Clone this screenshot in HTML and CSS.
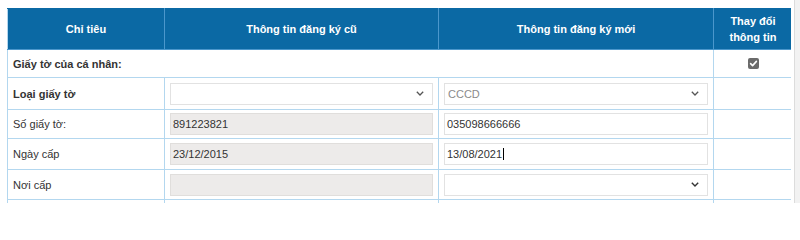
FILE: index.html
```html
<!DOCTYPE html>
<html lang="vi">
<head>
<meta charset="utf-8">
<title>Thay đổi thông tin</title>
<link rel="stylesheet" href="styles.css">
</head>
<body>
<div class="page">
  <div class="content">
    <table class="grid">
      <colgroup>
        <col class="c1"><col class="c2"><col class="c3"><col class="c4">
      </colgroup>
      <thead>
        <tr class="head">
          <th>Chỉ tiêu</th>
          <th>Thông tin đăng ký cũ</th>
          <th>Thông tin đăng ký mới</th>
          <th>Thay đổi<br>thông tin</th>
        </tr>
      </thead>
      <tbody>
        <tr class="r-section">
          <td colspan="3" class="label bold">Giấy tờ của cá nhân:</td>
          <td class="center"><span class="check"><svg viewBox="0 0 11 11" width="11" height="11"><path d="M2.6 5.6 L4.6 7.6 L8.4 3.4" fill="none" stroke="#fff" stroke-width="1.6" stroke-linecap="round" stroke-linejoin="round"/></svg></span></td>
        </tr>
        <tr class="r-type">
          <td class="label bold">Loại giấy tờ</td>
          <td><div class="field select"><span class="val"></span><svg class="chev" viewBox="0 0 8 5" width="8" height="5"><path d="M0.8 0.8 L4 4 L7.2 0.8" fill="none" stroke="#555" stroke-width="1.3"/></svg></div></td>
          <td><div class="field select"><span class="val muted">CCCD</span><svg class="chev" viewBox="0 0 8 5" width="8" height="5"><path d="M0.8 0.8 L4 4 L7.2 0.8" fill="none" stroke="#555" stroke-width="1.3"/></svg></div></td>
          <td></td>
        </tr>
        <tr class="r-num">
          <td class="label">Số giấy tờ:</td>
          <td><div class="field disabled"><span class="val">891223821</span></div></td>
          <td><div class="field"><span class="val">035098666666</span></div></td>
          <td></td>
        </tr>
        <tr class="r-date">
          <td class="label">Ngày cấp</td>
          <td><div class="field disabled"><span class="val">23/12/2015</span></div></td>
          <td><div class="field"><span class="val">13/08/2021</span><span class="caret"></span></div></td>
          <td></td>
        </tr>
        <tr class="r-place">
          <td class="label">Nơi cấp</td>
          <td><div class="field disabled"><span class="val"></span></div></td>
          <td><div class="field select"><span class="val"></span><svg class="chev" viewBox="0 0 8 5" width="8" height="5"><path d="M0.8 0.8 L4 4 L7.2 0.8" fill="none" stroke="#333" stroke-width="1.4"/></svg></div></td>
          <td></td>
        </tr>
        <tr class="r-more">
          <td></td><td></td><td></td><td></td>
        </tr>
      </tbody>
    </table>
  </div>
  <div class="scrollbar"></div>
</div>
</body>
</html>
```

FILE: styles.css
```css
html, body {
  margin: 0;
  padding: 0;
  background: #fff;
  height: 203px;
  overflow: hidden;
}
body {
  font-family: "Liberation Sans", Arial, sans-serif;
  font-size: 11px;
  color: #333;
}
.page {
  display: flex;
  height: 203px;
}
.content {
  flex: 1;
  padding: 8px 0 0 7px;
  overflow: hidden;
}
.scrollbar {
  width: 5px;
  border-left: 1px solid #dcdcdc;
  background: #f2f2f2;
  margin-left: 3px;
}
.grid {
  border-collapse: collapse;
  table-layout: fixed;
  width: 785px;
}
.c1 { width: 157px; }
.c2 { width: 274px; }
.c3 { width: 275px; }
.c4 { width: 79px; }
.grid td, .grid th {
  border: 1px solid #b3d7ef;
  padding: 0 5px;
  vertical-align: middle;
}
.head th {
  background: #0b69a4;
  color: #fff;
  font-weight: bold;
  text-align: center;
  height: 40px;
  line-height: 16px;
  padding: 0 4px;
  border-color: #4b97cc;
  border-top-color: #0b69a4;
}
.head th:first-child { border-left-color: #b3d7ef; }
.head th:last-child { border-right-color: #b3d7ef; }
.grid td.label { padding-left: 5px; }
.bold { font-weight: bold; }
.center { text-align: center; }
.r-section td { height: 27px; }
.r-type td { height: 31px; }
.r-num td { height: 28px; }
.r-date td { height: 30px; }
.r-place td { height: 29px; }
.r-more td { height: 30px; }
.check {
  display: inline-block;
  width: 11px;
  height: 11px;
  background: #6b6b6b;
  border-radius: 2px;
  vertical-align: middle;
  margin-top: -2px;
}
.check svg { display: block; }
.field {
  display: flex;
  align-items: center;
  height: 20px;
  border: 1px solid #e2e2e2;
  background: #fff;
  padding: 0 2px;
  box-sizing: content-box;
}
.field.disabled {
  background: #edebea;
  border-color: #e0dedc;
}
.field.select { padding-right: 8px; }
.field .val { flex: 1; white-space: nowrap; }
.field .muted { color: #8a8a8a; }
.field.select .val { padding-left: 1px; }
.chev { display: block; flex: none; }
.caret {
  display: inline-block;
  width: 1px;
  height: 12px;
  background: #000;
  margin-left: 1px;
  flex: none;
  margin-right: auto;
}
.field:has(.caret) .val { flex: none; }
```
